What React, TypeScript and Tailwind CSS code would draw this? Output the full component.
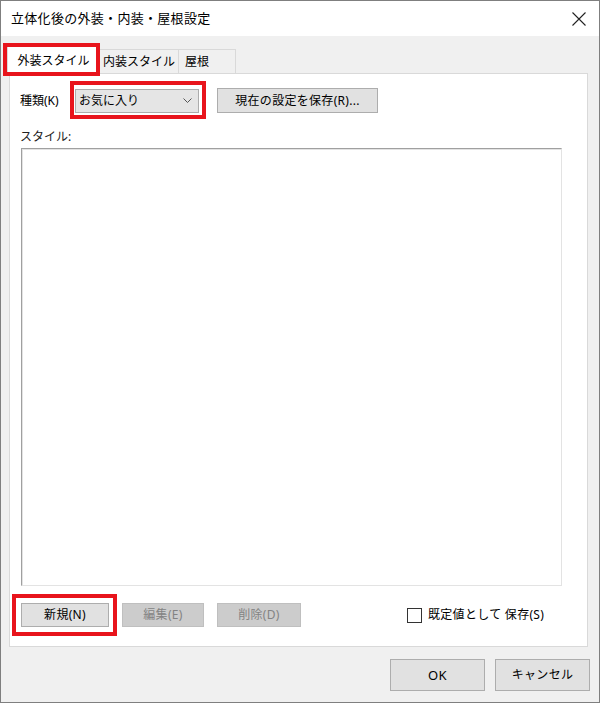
import React from "react";

const font = { fontFamily: '"Noto Sans", "Noto Sans CJK JP", sans-serif' };

function RedMark({ className }: { className: string }) {
  return <div className={`pointer-events-none absolute border-4 border-[#e8141c] ${className}`} />;
}

function WinButton({
  children,
  className = "",
  disabled = false,
}: {
  children: React.ReactNode;
  className?: string;
  disabled?: boolean;
}) {
  return (
    <button
      disabled={disabled}
      className={`flex items-center justify-center border text-[12px] leading-none tracking-[0.3px] ${
        disabled
          ? "bg-[#cccccc] border-[#bfbfbf] text-[#838383]"
          : "bg-[#e1e1e1] border-[#adadad] text-black"
      } ${className}`}
    >
      {children}
    </button>
  );
}

export default function App() {
  return (
    <div
      style={font}
      className="w-[600px] h-[703px] border border-[#7f7f7f] bg-[#f0f0f0] flex flex-col text-black select-none"
    >
      {/* Title bar */}
      <div className="h-[35px] shrink-0 bg-white flex items-center justify-between pl-[10px] pr-[13px]">
        <span className="text-[13px] tracking-[0.3px]">立体化後の外装・内装・屋根設定</span>
        <svg width="14" height="14" viewBox="0 0 14 14" className="text-[#222]">
          <path d="M0.5 0.5 L13.5 13.5 M13.5 0.5 L0.5 13.5" stroke="currentColor" strokeWidth="1.1" />
        </svg>
      </div>

      <div className="flex-1 flex flex-col pl-[8px] pr-[11px]">
        {/* Tabs */}
        <div className="mt-[10px] flex items-end -ml-[2px] h-[28px] relative z-10">
          <div className="relative w-[93px] h-[28px] bg-white border border-b-0 border-[#d9d9d9] flex items-center justify-center text-[12px]">
            外装スタイル
            <RedMark className="-left-[5px] -right-[1px] -top-[4px] -bottom-[2px]" />
          </div>
          <div className="w-[79px] h-[25px] bg-[#f0f0f0] border border-l-0 border-[#d9d9d9] flex items-center justify-center text-[12px]">
            内装スタイル
          </div>
          <div className="w-[57px] h-[25px] bg-[#f0f0f0] border border-l-0 border-[#d9d9d9] flex items-center pl-[6px] text-[12px]">
            屋根
          </div>
        </div>

        {/* Tab panel */}
        <div className="-mt-[1px] bg-white border border-[#d9d9d9] pt-[14px] pb-[19px] pl-[10px] pr-[11px]">
          <div className="flex items-center h-[25px]">
            <span className="w-[55px] text-[12px]">種類(K)</span>
            <div className="relative">
              <div className="w-[124px] h-[24px] bg-[#e5e5e5] border border-[#acacac] flex items-center justify-between pl-[3px] pr-[6px] text-[12px]">
                <span>お気に入り</span>
                <svg width="9" height="5" viewBox="0 0 9 5">
                  <path d="M0.5 0.5 L4.5 4.5 L8.5 0.5" stroke="#555" fill="none" strokeWidth="1" />
                </svg>
              </div>
              <RedMark className="-left-[5px] -right-[7px] -top-[8px] -bottom-[6px]" />
            </div>
            <WinButton className="ml-[18px] w-[161px] h-[25px]">現在の設定を保存(R)...</WinButton>
          </div>

          <div className="mt-[16px] h-[16px] text-[12px] leading-[16px] text-[#222]">スタイル:</div>

          <div className="mt-[3px] ml-[1px] w-[541px] h-[438px] bg-white border border-[#a0a0a0] border-b-[#e3e3e3] border-r-[#e3e3e3] shadow-[inset_1px_1px_0_#e3e3e3]" />

          <div className="mt-[17px] ml-[1px] flex items-center h-[24px]">
            <div className="relative">
              <WinButton className="w-[88px] h-[24px]">新規(N)</WinButton>
              <RedMark className="-left-[9px] -right-[8px] -top-[9px] -bottom-[9px]" />
            </div>
            <WinButton disabled className="ml-[13px] w-[82px] h-[24px]">編集(E)</WinButton>
            <WinButton disabled className="ml-[13px] w-[84px] h-[24px]">削除(D)</WinButton>
            <div className="ml-[106px] flex items-center gap-[6px] text-[12px] tracking-[0.3px]">
              <div className="w-[15px] h-[15px] border border-[#333] bg-white" />
              <span>既定値として 保存(S)</span>
            </div>
          </div>
        </div>

        {/* Footer buttons */}
        <div className="mt-[12px] flex justify-end gap-[10px]">
          <WinButton className="w-[95px] h-[32px] text-[13px]">OK</WinButton>
          <WinButton className="w-[95px] h-[32px] -mr-[2px]">キャンセル</WinButton>
        </div>
      </div>
    </div>
  );
}
